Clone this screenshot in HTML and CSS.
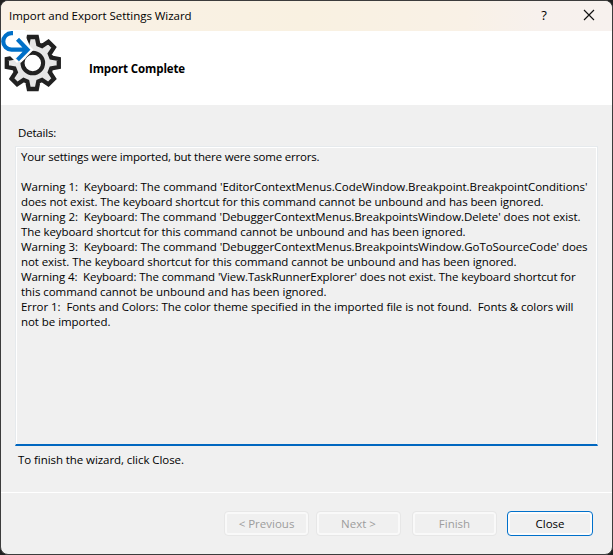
FILE: index.html
```html
<!DOCTYPE html>
<html lang="en">
<head>
<meta charset="utf-8">
<title>Import and Export Settings Wizard</title>
<link rel="stylesheet" href="styles.css">
</head>
<body>
<div class="window">
  <header class="titlebar">
    <span class="title">Import and Export Settings Wizard</span>
    <span class="help">?</span>
    <svg class="close-icon" width="12" height="12" viewBox="0 0 12 12"><path d="M1 1 11 11M11 1 1 11" fill="none" stroke="#111" stroke-width="1.15"/></svg>
  </header>
  <section class="banner">
    <svg class="gear" width="62" height="62" viewBox="0 30 62 62">
      <g transform="translate(31.8 63)">
        <path d="M-5.5-18.5-4-26H4L5.5-18.5 9.2-17 15.6-21.2 21.2-15.6 17-9.2 18.5-5.5 26-4V4L18.5 5.5 17 9.2 21.2 15.6 15.6 21.2 9.2 17 5.5 18.5 4 26H-4L-5.5 18.5-9.2 17-15.6 21.2-21.2 15.6-17 9.2-18.5 5.5-26 4V-4L-18.5-5.5-17-9.2-21.2-15.6-15.6-21.2-9.2-17Z" fill="#e6e6e6" stroke="#212121" stroke-width="4.3"/>
        <circle r="10.3" fill="#fff" stroke="#212121" stroke-width="4.1"/>
      </g>
      <path d="M0 29H24.500V36L30 48.5 28 51 16 63 9 56 0 52Z" fill="#fff"/>
      <path d="M14 58 19 63 25 58 22 52Z" fill="#e6e6e6"/>
      <path d="M10 50H26M17 39.5 27 49.8 17 60" fill="none" stroke="#fff" stroke-width="8"/>
      <path d="M12 33.2H10.5A8.2 8.2 0 0 0 10.500 49.700H25M16.500 39.3 26.500 49.700 16.500 59.9" fill="none" stroke="#0070c8" stroke-width="4.2"/>
    </svg>
    <h1>Import Complete</h1>
  </section>
  <main class="content">
    <div class="label">Details:</div>
    <div class="details">
      <div class="l1">Your settings were imported, but there were some errors.</div>
      <div>&nbsp;</div>
      <div class="l2">Warning 1:  Keyboard: The command 'EditorContextMenus.CodeWindow.Breakpoint.BreakpointConditions'</div>
      <div class="l3">does not exist. The keyboard shortcut for this command cannot be unbound and has been ignored.</div>
      <div class="l4">Warning 2:  Keyboard: The command 'DebuggerContextMenus.BreakpointsWindow.Delete' does not exist.</div>
      <div class="l5">The keyboard shortcut for this command cannot be unbound and has been ignored.</div>
      <div class="l6">Warning 3:  Keyboard: The command 'DebuggerContextMenus.BreakpointsWindow.GoToSourceCode' does</div>
      <div class="l7">not exist. The keyboard shortcut for this command cannot be unbound and has been ignored.</div>
      <div class="l8">Warning 4:  Keyboard: The command 'View.TaskRunnerExplorer' does not exist. The keyboard shortcut for</div>
      <div class="l9">this command cannot be unbound and has been ignored.</div>
      <div class="l10">Error 1:  Fonts and Colors: The color theme specified in the imported file is not found.  Fonts &amp; colors will</div>
      <div class="l11">not be imported.</div>
    </div>
    <div class="hint">To finish the wizard, click Close.</div>
  </main>
  <footer class="actions">
    <button disabled>&lt; Previous</button>
    <button disabled>Next &gt;</button>
    <button class="finish" disabled>Finish</button>
    <button class="primary">Close</button>
  </footer>
</div>
</body>
</html>
```
FILE: styles.css
```css
* { box-sizing: border-box; }
body {
  margin: 0;
  height: 555px;
  overflow: hidden;
  background: #202020;
  color: #000;
  font: 11.5px/15px "Open Sans", "Noto Sans", sans-serif;
}
.window {
  display: flex;
  flex-direction: column;
  height: 555px;
  border: 1px solid #3c3c3c;
  border-radius: 8px;
  overflow: hidden;
  background: #f0f0f0;
}
.titlebar {
  display: flex;
  align-items: center;
  flex: 0 0 30px;
  padding: 0 17px 0 8px;
  background: linear-gradient(90deg, #f9f1e6 0%, #f9f1e1 50%, #f9f1e6 76%, #f7f1ed 88%, #f7f1ee 100%);
}
.title { flex: 1; padding-bottom: 1px; letter-spacing: -.04px; }
.help { width: 8px; margin-right: 35px; padding-bottom: 2px; font-size: 13px; text-align: center; }
.close-icon { display: block; margin-bottom: 2px; }
.banner {
  display: flex;
  align-items: center;
  flex: 0 0 74px;
  background: #fff;
}
.gear { margin: -14px 26px 0 0; }
h1 { margin: 1px 0 0; font-size: 11.5px; font-weight: 700; letter-spacing: -.12px; }
.content { flex: 1; padding: 20px 14px 0; }
.label { padding-left: 3px; letter-spacing: -.2px; }
.details {
  height: 300px;
  margin-top: 6px;
  padding: 2px 0 0 5px;
  border: 1px solid #e6eaed;
  border-bottom: 2px solid #0067c0;
  box-shadow: inset 1px 1px #fff, inset -1px 0 #fff;
}
.details div { white-space: pre; }
.hint { padding: 6px 0 0 3px; letter-spacing: -.07px; }
.l1 { letter-spacing: -.19px; }
.l2 { letter-spacing: -.058px; }
.l3 { letter-spacing: -.096px; }
.l4 { letter-spacing: -.071px; }
.l5 { letter-spacing: -.078px; }
.l6 { letter-spacing: -.066px; }
.l7 { letter-spacing: -.081px; }
.l8 { letter-spacing: -.117px; }
.l9 { letter-spacing: -.05px; }
.l10 { letter-spacing: -.059px; }
.l11 { letter-spacing: -.056px; }
.actions {
  display: flex;
  justify-content: flex-end;
  flex: 0 0 62px;
  gap: 7px;
  padding: 18px 19px 0 0;
  border-top: 1px solid #fff;
}
button {
  width: 85px;
  height: 25px;
  padding: 0;
  border: 1px solid #e7e7e7;
  border-radius: 4px;
  background: #f0f0f0;
  box-shadow: inset 0 0 0 2px #f9f9f9;
  color: #9d9d9d;
  font: inherit;
}
.finish { margin: 0 3px 0 4px; }
.primary {
  width: 86px;
  border-color: #0070cb;
  box-shadow: inset 0 0 0 2px #fcfcfc;
  color: #000;
}
```
